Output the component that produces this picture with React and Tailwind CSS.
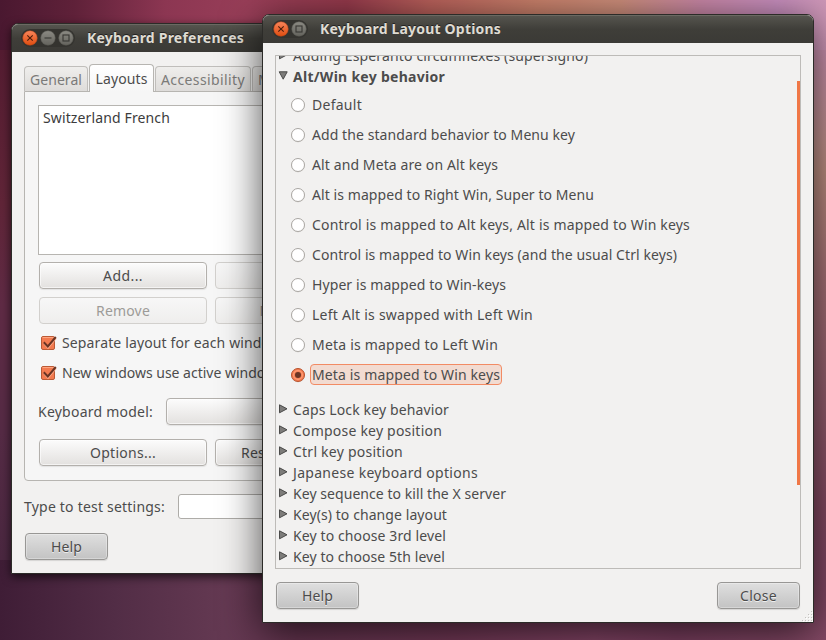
import { useLayoutEffect, useRef, useState } from "react";

/* Text run spaced so that it fills the given width. */
function T({ w, children, className = "" }) {
  const ref = useRef(null);
  const [ls, setLs] = useState(0);
  useLayoutEffect(() => {
    const natural = ref.current.getBoundingClientRect().width;
    setLs((w - natural) / children.length);
  }, []);
  return (
    <span ref={ref} style={{ letterSpacing: ls + "px" }} className={"inline-block whitespace-pre " + className}>
      {children}
    </span>
  );
}

function WinButton({ kind }) {
  const close = kind === "close";
  return (
    <svg width="16" height="16" viewBox="0 0 16 16" className="shrink-0">
      <defs>
        <linearGradient id={"wb-" + kind} x1="0" y1="0" x2="0" y2="1">
          <stop offset="0" stopColor={close ? "#f9855b" : "#8b8a83"} />
          <stop offset="1" stopColor={close ? "#e04d10" : "#64635d"} />
        </linearGradient>
      </defs>
      <circle cx="8" cy="8" r="7.3" fill={"url(#wb-" + kind + ")"} stroke={close ? "#b04418" : "#55544f"} strokeWidth="0.5" />
      <g fill="none" stroke={close ? "#4a1d0c" : "#383733"} strokeWidth="1.1">
        {close && <path d="M5.3 5.3l5.4 5.4M10.7 5.3l-5.4 5.4" />}
        {kind === "min" && <path d="M4.5 8h7" />}
        {kind === "max" && <rect x="5" y="5" width="6" height="6" />}
      </g>
    </svg>
  );
}

function TitleBar({ kinds, title, w }) {
  return (
    <div className="flex h-[28px] shrink-0 items-center rounded-t-[6px] border-t border-[#6a6962] bg-linear-to-b from-[#55544e] via-[#3f3e39] to-[#3b3a36] pb-[2px] pl-[9px]">
      <div className="mr-[12px] flex h-[18px] items-center gap-[2px] rounded-full bg-[#34332f] px-px">
        {kinds.map((k) => <WinButton key={k} kind={k} />)}
      </div>
      <T w={w} className="font-bold text-[#dfdbd2] [text-shadow:0_-1px_0_#222]">{title}</T>
    </div>
  );
}

function Button({ children, w, className = "", disabled }) {
  return (
    <div
      className={
        "flex h-[27px] shrink-0 items-center justify-center rounded-[4px] border " +
        (disabled
          ? "border-[#d2d0cd] bg-linear-to-b from-[#f7f7f7] to-[#efeeed] text-[#9d9b98] "
          : "border-[#b3b0ac] bg-linear-to-b from-[#fcfcfc] to-[#e3e1df] shadow-[0_1px_1px_rgba(0,0,0,0.08),inset_0_0_0_1px_rgba(255,255,255,0.6)] ") +
        className
      }
    >
      {children && <T w={w}>{children}</T>}
    </div>
  );
}

function GreyButton({ children, w }) {
  return (
    <div className="flex h-[27px] w-[83px] items-center justify-center rounded-[4px] border border-[#989795] bg-linear-to-b from-[#dfdfdf] to-[#c3c3c3] shadow-[0_1px_1px_rgba(0,0,0,0.12),inset_0_0_0_1px_rgba(255,255,255,0.3)] [text-shadow:0_1px_0_#eee]">
      <T w={w}>{children}</T>
    </div>
  );
}

function Check({ w, children }) {
  return (
    <div className="flex h-[30px] items-center pl-[2px]">
      <svg width="17" height="16" viewBox="0 0 17 16" className="mr-[5px] shrink-0">
        <rect x="1.5" y="1.5" width="13" height="13" rx="1.5" fill="#f37b50" stroke="#bb5a35" />
        <path d="M2.5 2.5h11" stroke="#ffa581" />
        <path d="M4 7l4 4.6L15.8 2" fill="none" stroke="#ffad8b" strokeWidth="2" transform="translate(0 1)" />
        <path d="M3.8 7.2l4 4.2L15.8 2" fill="none" stroke="#6a3423" strokeWidth="2" />
      </svg>
      <T w={w}>{children}</T>
    </div>
  );
}

function Tab({ w, children, className = "" }) {
  return (
    <div className={"flex h-[25px] shrink-0 items-center justify-center rounded-t-[4px] border border-b-0 border-[#c0bebb] bg-linear-to-b from-[#efeeec] to-[#dedcda] pt-[2px] text-[#7b7a78] " + className}>
      <T w={w}>{children}</T>
    </div>
  );
}

function KeyboardPreferences() {
  return (
    <div className="absolute top-[23px] left-[11px] flex h-[551px] w-[400px] flex-col rounded-t-[7px] border border-[#2c2b28] bg-[#f2f1f0] shadow-[0_3px_10px_rgba(0,0,0,0.65)]">
      <TitleBar kinds={["close", "min", "max"]} title="Keyboard Preferences" w={157} />
      <div className="flex flex-col px-[12px] pt-[12px]">
        <div className="flex h-[27px] items-end">
          <Tab w={52} className="w-[64px]">General</Tab>
          <div className="z-10 mx-px -mb-px flex h-[28px] w-[65px] shrink-0 items-center justify-center rounded-t-[4px] border border-b-0 border-[#b7b5b1] bg-linear-to-b from-white to-[#f6f6f6] pt-px">
            <T w={52}>Layouts</T>
          </div>
          <Tab w={84} className="w-[96px]">Accessibility</Tab>
          <Tab w={82} className="ml-px w-[94px]">Mouse Keys</Tab>
        </div>
        <div className="flex h-[390px] w-[373px] flex-col rounded-b-[4px] rounded-tr-[4px] border border-[#b7b5b1] bg-[#f6f6f6] pt-[13px] pl-[13px]">
          <div className="h-[150px] w-[346px] border border-[#b7b5b1] bg-white px-[4px] pt-[2px] text-[#3c3c3c]">
            <T w={127}>Switzerland French</T>
          </div>
          <div className="mt-[7px] ml-px flex gap-[8px]">
            <Button w={40} className="w-[168px]">Add...</Button>
            <Button w={60} disabled className="w-[168px]">Move Up</Button>
          </div>
          <div className="mt-[8px] ml-px flex gap-[8px]">
            <Button w={54} disabled className="w-[168px]">Remove</Button>
            <Button w={79} disabled className="w-[168px]">Move Down</Button>
          </div>
          <div className="mt-[4px]">
            <Check w={219}>Separate layout for each window</Check>
            <Check w={214}>New windows use active window</Check>
          </div>
          <div className="mt-[10px] flex items-center">
            <T w={115}>Keyboard model:</T>
            <Button className="ml-[13px] w-[218px]" />
          </div>
          <div className="mt-[14px] ml-px flex gap-[8px]">
            <Button w={66} className="w-[168px]">Options...</Button>
            <Button w={116} className="w-[168px]">Reset to Defaults</Button>
          </div>
        </div>
        <div className="mt-[13px] flex items-center">
          <T w={141}>Type to test settings:</T>
          <div className="ml-[13px] h-[25px] w-[218px] rounded-[3px] border border-[#aeaca8] bg-white" />
        </div>
        <div className="mt-[14px] ml-px">
          <GreyButton w={31}>Help</GreyButton>
        </div>
      </div>
    </div>
  );
}

function Arrow({ open }) {
  return (
    <svg width="10" height="10" viewBox="0 0 10 10" className="mr-[5px] mb-[2px] shrink-0">
      <path d={open ? "M1.2 0.8h8L5.2 8.2z" : "M1.5 0.8v8L9 4.8z"} fill="#7d7c7a" stroke="#4a4a49" strokeWidth="1" />
    </svg>
  );
}

function Group({ w, open, children }) {
  return (
    <div className="flex h-[21px] shrink-0 items-center pl-[2px]">
      <Arrow open={open} />
      <T w={w} className={open ? "font-bold" : ""}>{children}</T>
    </div>
  );
}

const options = [
  ["Default", 50],
  ["Add the standard behavior to Menu key", 263],
  ["Alt and Meta are on Alt keys", 186],
  ["Alt is mapped to Right Win, Super to Menu", 282],
  ["Control is mapped to Alt keys, Alt is mapped to Win keys", 378],
  ["Control is mapped to Win keys (and the usual Ctrl keys)", 365],
  ["Hyper is mapped to Win-keys", 194],
  ["Left Alt is swapped with Left Win", 221],
  ["Meta is mapped to Left Win", 186],
  ["Meta is mapped to Win keys", 188],
];

const groups = [
  ["Caps Lock key behavior", 156],
  ["Compose key position", 149],
  ["Ctrl key position", 110],
  ["Japanese keyboard options", 185],
  ["Key sequence to kill the X server", 213],
  ["Key(s) to change layout", 154],
  ["Key to choose 3rd level", 153],
  ["Key to choose 5th level", 152],
];

function Radio({ label, w, on }) {
  return (
    <div className="flex h-[30px] items-center pl-[14px]">
      <svg width="16" height="16" viewBox="0 0 16 16" className="mr-[4px] shrink-0">
        <circle cx="8" cy="8.4" r="7" fill="#dddbd8" />
        <circle cx="8" cy="8" r="6.5" fill={on ? "#f37b50" : "#fff"} stroke={on ? "#b9532d" : "#aaa7a3"} strokeWidth="1" />
        {on && <circle cx="8" cy="8" r="4.4" fill="none" stroke="#ff9c74" strokeWidth="1.2" />}
        {on && <circle cx="8" cy="8" r="3" fill="#6a3423" />}
      </svg>
      <div className={"flex h-[21px] items-center rounded-[4px] border px-px " + (on ? "-mt-px border-[#f28b64] bg-[#f2dbd1] pt-px" : "border-transparent")}>
        <T w={w}>{label}</T>
      </div>
    </div>
  );
}

function LayoutOptions() {
  return (
    <div className="absolute top-[14px] left-[262px] flex h-[609px] w-[552px] flex-col rounded-t-[7px] border border-[#2c2b28] bg-[#f2f1f0] shadow-[0_8px_40px_rgba(0,0,0,0.7)]">
      <TitleBar kinds={["close", "max"]} title="Keyboard Layout Options" w={181} />
      <div className="flex flex-col px-[12px] pt-[12px]">
        <div className="flex h-[514px] w-[526px] justify-between overflow-hidden border border-[#bdbbb8]">
          <div className="-mt-[11px] flex flex-col">
            <Group w={295}>Adding Esperanto circumflexes (supersigno)</Group>
            <Group w={152} open>Alt/Win key behavior</Group>
            <div className="mt-[3px] mb-[9px]">
              {options.map(([label, w], i) => <Radio key={label} label={label} w={w} on={i === 9} />)}
            </div>
            {groups.map(([label, w]) => <Group key={label} w={w}>{label}</Group>)}
          </div>
          <div className="mt-[25px] h-[404px] w-[3px] bg-[#f07746]" />
        </div>
        <div className="mt-[13px] flex w-[525px] justify-between pl-px">
          <GreyButton w={31}>Help</GreyButton>
          <GreyButton w={37}>Close</GreyButton>
        </div>
      </div>
      <svg width="11" height="11" viewBox="0 0 11 11" className="absolute right-0 bottom-0">
        {[0, 1, 2, 3].map((r) =>
          Array.from({ length: r + 1 }, (_, c) => (
            <g key={r + "-" + c}>
              <rect x={9 - c * 3} y={r * 3} width="1" height="1" fill="#c4c2bf" />
              <rect x={10 - c * 3} y={r * 3 + 1} width="1" height="1" fill="#fff" />
            </g>
          ))
        )}
      </svg>
    </div>
  );
}

export default function App() {
  return (
    <div className="relative flex h-[640px] w-[826px] flex-col overflow-hidden bg-[#5a2f48] font-['Noto_Sans','Open_Sans',sans-serif] text-[14px] leading-[20px] text-[#4c4c4c]">
      <div className="h-[50px] shrink-0 bg-linear-[90deg,#4a1830_0%,#5f2139_9%,#8c3652_20%,#983e58_30%,#963a4c_42%,#ba615b_52%,#cb826c_65%,#cf8f7c_75%,#ca88a8_85%,#ca90c0_94%,#cf98b8_100%]" />
      <div className="flex h-[510px] shrink-0 justify-between">
        <div className="w-[40px] bg-linear-[180deg,#541c31_0%,#602538_30%,#5f2b45_50%,#552b45_75%,#4a2740_100%]" />
        <div className="w-[40px] bg-linear-[180deg,#cc92b0_0%,#c4948f_18%,#c09183_24%,#a97378_45%,#986270_65%,#874b64_90%,#834965_100%]" />
      </div>
      <div className="h-[80px] shrink-0 bg-linear-[90deg,#3f1d36_0%,#522d46_14%,#643952_27%,#663550_36%,#743957_55%,#834465_72%,#7c3f60_82%,#854a66_100%]" />
      <KeyboardPreferences />
      <LayoutOptions />
    </div>
  );
}
